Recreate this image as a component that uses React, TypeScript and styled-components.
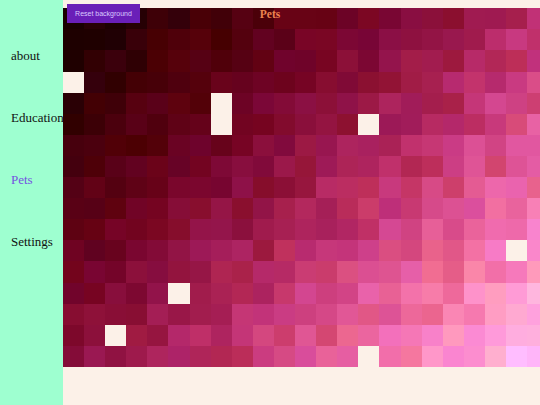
import React, { useMemo } from 'react';
import styled, { createGlobalStyle } from 'styled-components';

const GlobalStyle = createGlobalStyle`
  html, body {
    margin: 0;
    padding: 0;
    width: 540px;
    height: 405px;
    overflow: hidden;
  }
  body {
    font-family: "Liberation Serif", "Times New Roman", serif;
  }
`;

const COLS = 23;
const ROWS = 17;
const CELL = 21.1;

const Shell = styled.div`
  display: flex;
  width: 540px;
  height: 405px;
`;

const Sidebar = styled.nav`
  width: 63px;
  flex-shrink: 0;
  background: #9effd0;
  display: flex;
  flex-direction: column;
  padding-top: 47px;
  gap: 44px;
  box-sizing: border-box;
`;

const NavItem = styled.div<{ $active?: boolean }>`
  font-size: 13px;
  line-height: 18px;
  padding-left: 11px;
  color: ${(p) => (p.$active ? '#7553e0' : '#111111')};
  white-space: nowrap;
`;

const Main = styled.main`
  flex: 1;
  position: relative;
  background: #fcf1e8;
  overflow: hidden;
  padding-top: 8.3px;
`;

const Grid = styled.div`
  display: grid;
  grid-template-columns: repeat(${COLS}, ${CELL}px);
  grid-auto-rows: ${CELL}px;
  width: ${COLS * CELL}px;
`;

const Cell = styled.div`
  width: 100%;
  height: 100%;
`;

const ResetButton = styled.button`
  position: absolute;
  top: 4px;
  left: 4px;
  width: 73px;
  height: 19px;
  border: none;
  padding: 0;
  background: #6a1fb8;
  color: #d9c9ff;
  font-family: "Liberation Sans", Arial, sans-serif;
  font-size: 7px;
  cursor: pointer;
`;

const Title = styled.h1`
  position: absolute;
  top: 8px;
  left: 207px;
  transform: translateX(-50%);
  margin: 0;
  font-size: 11.5px;
  font-weight: bold;
  color: #ec8350;
`;

// colour stops from dark maroon to pale pink
const stops: [number, number, number, number][] = [
  [0, 22, 0, 0],
  [0.2, 78, 0, 10],
  [0.35, 118, 4, 40],
  [0.5, 158, 26, 76],
  [0.6, 192, 48, 106],
  [0.7, 218, 78, 138],
  [0.8, 243, 112, 168],
  [0.9, 255, 150, 205],
  [1, 255, 195, 245],
];

const holes = new Set(['3-0', '4-7', '5-7', '5-14', '13-5', '15-2', '11-21', '16-14']);

function mulberry(seed: number) {
  return () => {
    seed |= 0;
    seed = (seed + 0x6d2b79f5) | 0;
    let t = Math.imul(seed ^ (seed >>> 15), 1 | seed);
    t = (t + Math.imul(t ^ (t >>> 7), 61 | t)) ^ t;
    return ((t ^ (t >>> 14)) >>> 0) / 4294967296;
  };
}

function colourAt(t: number) {
  const c = Math.min(1, Math.max(0, t));
  for (let i = 1; i < stops.length; i++) {
    const [t1, r1, g1, b1] = stops[i];
    const [t0, r0, g0, b0] = stops[i - 1];
    if (c <= t1) {
      const k = (c - t0) / (t1 - t0);
      return [r0 + (r1 - r0) * k, g0 + (g1 - g0) * k, b0 + (b1 - b0) * k];
    }
  }
  return [255, 195, 245];
}

const clamp = (v: number) => Math.round(Math.max(0, Math.min(255, v)));

export default function App() {
  const cells = useMemo(() => {
    const rand = mulberry(42);
    const out: string[] = [];
    for (let r = 0; r < ROWS; r++) {
      for (let c = 0; c < COLS; c++) {
        if (holes.has(`${r}-${c}`)) {
          out.push('#fcf1e8');
          continue;
        }
        const base = 0.42 * (r / 16) + 0.58 * (c / 22);
        const t = base + (rand() - 0.5) * 0.1;
        const [red, g, b] = colourAt(t);
        const amp = 8 + 40 * Math.min(1, base);
        const blue = b + (rand() - 0.5) * amp;
        out.push(`rgb(${clamp(red)}, ${clamp(g)}, ${clamp(blue)})`);
      }
    }
    return out;
  }, []);

  return (
    <>
      <GlobalStyle />
      <Shell>
        <Sidebar>
          <NavItem>about</NavItem>
          <NavItem>Education</NavItem>
          <NavItem $active>Pets</NavItem>
          <NavItem>Settings</NavItem>
        </Sidebar>
        <Main>
          <Grid>
            {cells.map((bg, i) => (
              <Cell key={i} style={{ background: bg }} />
            ))}
          </Grid>
          <ResetButton>Reset background</ResetButton>
          <Title>Pets</Title>
        </Main>
      </Shell>
    </>
  );
}
